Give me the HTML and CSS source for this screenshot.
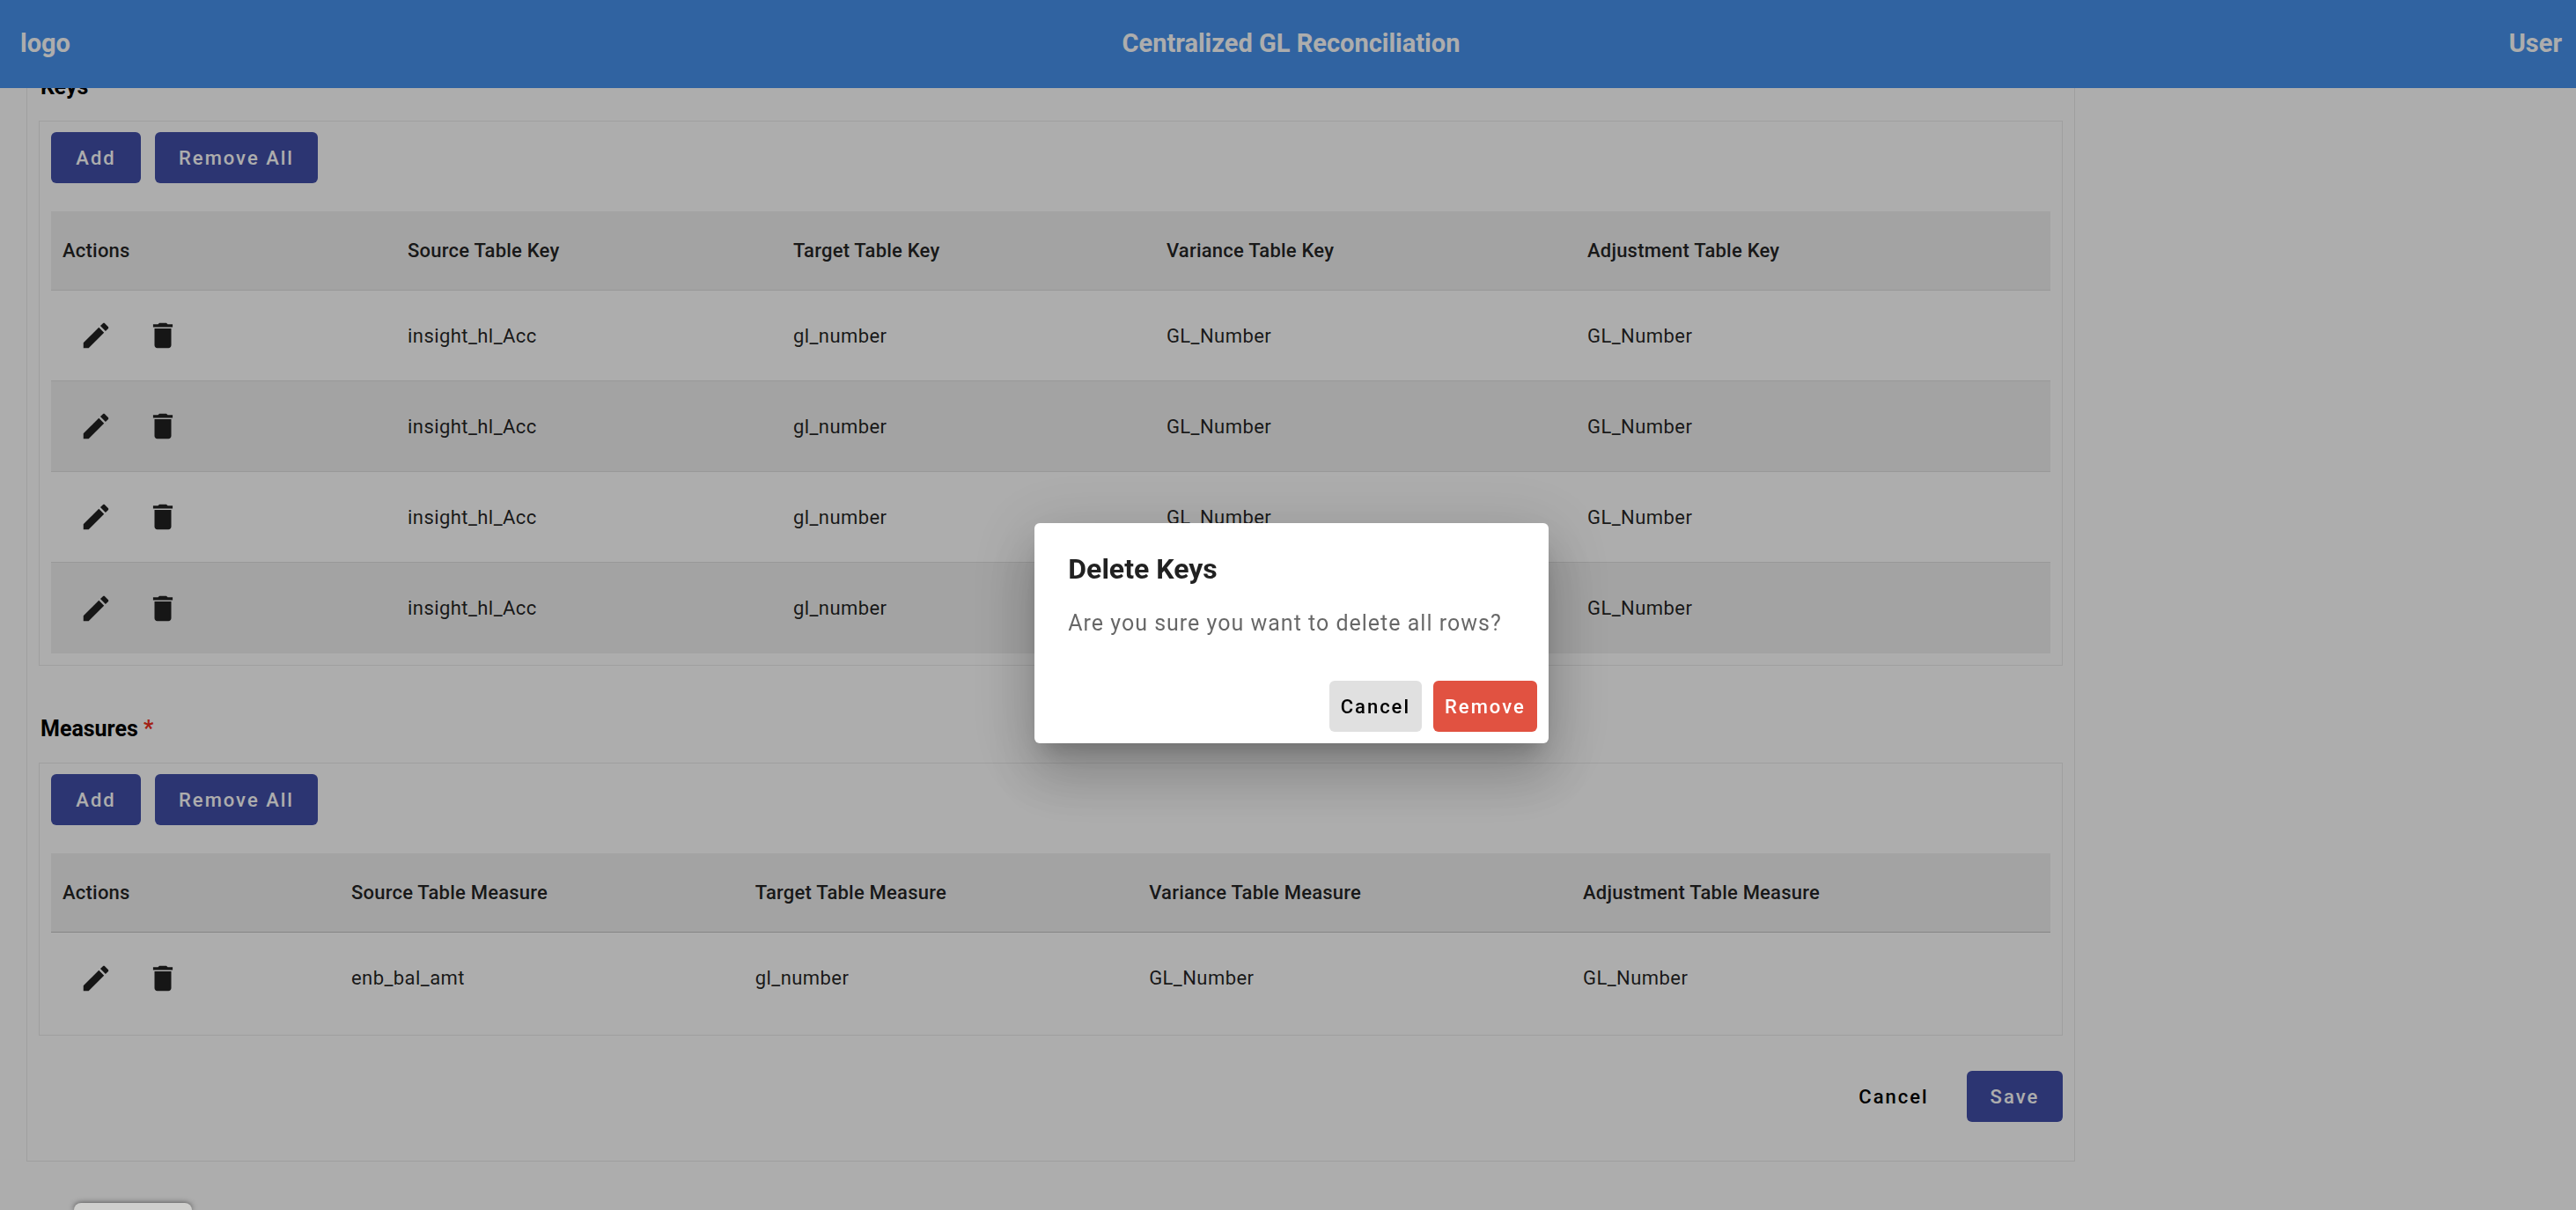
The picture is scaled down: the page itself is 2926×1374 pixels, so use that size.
FILE: index.html
```html
<!DOCTYPE html>
<html lang="en">
<head>
<meta charset="utf-8">
<title>Centralized GL Reconciliation</title>
<link rel="stylesheet" href="styles.css">
</head>
<body>
<svg class="sprite" aria-hidden="true">
  <symbol id="edit" viewBox="0 0 24 24"><path d="M3 17.25V21h3.75L17.81 9.94l-3.75-3.75L3 17.25zM20.71 7.04c.39-.39.39-1.02 0-1.41l-2.34-2.34c-.39-.39-1.02-.39-1.41 0l-1.83 1.83 3.75 3.75 1.83-1.83z"/></symbol>
  <symbol id="delete" viewBox="0 0 24 24"><path d="M6 19c0 1.1.9 2 2 2h8c1.1 0 2-.9 2-2V7H6v12zM19 4h-3.5l-1-1h-5l-1 1H5v2h14V4z"/></symbol>
</svg>

<header class="toolbar">
  <span class="toolbar-logo">logo</span>
  <h1 class="toolbar-title">Centralized GL Reconciliation</h1>
  <span class="toolbar-user">User</span>
</header>

<main class="page">
  <form class="config">
    <section class="group">
      <h2 class="group-title">Keys</h2>
      <div class="panel">
        <div class="panel-actions">
          <button type="button" class="btn btn-primary">Add</button>
          <button type="button" class="btn btn-primary">Remove All</button>
        </div>
        <table class="grid keys">
          <colgroup><col class="c1"><col class="c2"><col class="c3"><col class="c4"><col></colgroup>
          <thead>
            <tr><th scope="col">Actions</th><th scope="col">Source Table Key</th><th scope="col">Target Table Key</th><th scope="col">Variance Table Key</th><th scope="col">Adjustment Table Key</th></tr>
          </thead>
          <tbody>
            <tr>
              <td><div class="row-actions"><button type="button" class="icon-btn" aria-label="Edit"><svg><use href="#edit"/></svg></button><button type="button" class="icon-btn" aria-label="Delete"><svg><use href="#delete"/></svg></button></div></td>
              <td>insight_hl_Acc</td><td>gl_number</td><td>GL_Number</td><td>GL_Number</td>
            </tr>
            <tr>
              <td><div class="row-actions"><button type="button" class="icon-btn" aria-label="Edit"><svg><use href="#edit"/></svg></button><button type="button" class="icon-btn" aria-label="Delete"><svg><use href="#delete"/></svg></button></div></td>
              <td>insight_hl_Acc</td><td>gl_number</td><td>GL_Number</td><td>GL_Number</td>
            </tr>
            <tr>
              <td><div class="row-actions"><button type="button" class="icon-btn" aria-label="Edit"><svg><use href="#edit"/></svg></button><button type="button" class="icon-btn" aria-label="Delete"><svg><use href="#delete"/></svg></button></div></td>
              <td>insight_hl_Acc</td><td>gl_number</td><td>GL_Number</td><td>GL_Number</td>
            </tr>
            <tr>
              <td><div class="row-actions"><button type="button" class="icon-btn" aria-label="Edit"><svg><use href="#edit"/></svg></button><button type="button" class="icon-btn" aria-label="Delete"><svg><use href="#delete"/></svg></button></div></td>
              <td>insight_hl_Acc</td><td>gl_number</td><td>GL_Number</td><td>GL_Number</td>
            </tr>
          </tbody>
        </table>
      </div>
    </section>

    <section class="group">
      <h2 class="group-title">Measures <span class="required">*</span></h2>
      <div class="panel">
        <div class="panel-actions">
          <button type="button" class="btn btn-primary">Add</button>
          <button type="button" class="btn btn-primary">Remove All</button>
        </div>
        <table class="grid measures">
          <colgroup><col class="c1"><col class="c2"><col class="c3"><col class="c4"><col></colgroup>
          <thead>
            <tr><th scope="col">Actions</th><th scope="col">Source Table Measure</th><th scope="col">Target Table Measure</th><th scope="col">Variance Table Measure</th><th scope="col">Adjustment Table Measure</th></tr>
          </thead>
          <tbody>
            <tr>
              <td><div class="row-actions"><button type="button" class="icon-btn" aria-label="Edit"><svg><use href="#edit"/></svg></button><button type="button" class="icon-btn" aria-label="Delete"><svg><use href="#delete"/></svg></button></div></td>
              <td>enb_bal_amt</td><td>gl_number</td><td>GL_Number</td><td>GL_Number</td>
            </tr>
          </tbody>
        </table>
      </div>
    </section>

    <div class="form-actions">
      <button type="button" class="btn btn-text">Cancel</button>
      <button type="submit" class="btn btn-primary">Save</button>
    </div>
  </form>
</main>

<div class="overlay">
  <div class="dialog" role="alertdialog" aria-modal="true" aria-labelledby="dialog-title" aria-describedby="dialog-text">
    <h2 class="dialog-title" id="dialog-title">Delete Keys</h2>
    <p class="dialog-text" id="dialog-text">Are you sure you want to delete all rows?</p>
    <div class="dialog-actions">
      <button type="button" class="btn btn-compact btn-neutral">Cancel</button>
      <button type="button" class="btn btn-compact btn-warn">Remove</button>
    </div>
  </div>
</div>
<div class="status-popup"></div>
</body>
</html>
```

FILE: styles.css
```css
* { box-sizing: border-box; }

body {
  margin: 0;
  background: #fff;
  color: rgba(0, 0, 0, 0.87);
  font-family: Roboto, "Liberation Sans", sans-serif;
  font-size: 22px;
  overflow: hidden;
}

.sprite { display: none; }

/* Toolbar */
.toolbar {
  position: fixed;
  inset: 0 0 auto;
  z-index: 1;
  display: grid;
  grid-template-columns: 1fr auto 1fr;
  align-items: center;
  height: 100px;
  padding: 0 16px 2px 23px;
  background: #4893ed;
  color: #fff;
  font-size: 29px;
  font-weight: 700;
}

.toolbar-title {
  margin: 0;
  font: inherit;
}

.toolbar-user { text-align: right; }

/* Form */
.page { padding: 60px 30px 56px; }

.config {
  width: 81.2%;
  padding: 24px 13px 44px;
  border: 1px solid #ebebeb;
}

.group + .group { margin-top: 58px; }

.group-title {
  margin: 0 0 24px 2px;
  color: #000;
  font-size: 25px;
  font-weight: 700;
  line-height: 28px;
}

.required { color: #f03020; }

.panel {
  padding: 12px 13px 13px;
  border: 1px solid #ebebeb;
}

.panel-actions {
  display: flex;
  gap: 16px;
  margin-bottom: 32px;
}

/* Buttons */
.btn {
  min-width: 102px;
  height: 58px;
  padding: 0 27px;
  border: 0;
  border-radius: 6px;
  font: 500 22px Roboto, "Liberation Sans", sans-serif;
  letter-spacing: 2px;
}

.btn-primary { background: #424fa9; color: #fff; }
.btn-text { background: transparent; color: #000; }
.btn-neutral { background: #e0e0e0; color: #000; }
.btn-warn { background: #e15241; color: #fff; }
.btn-compact { padding: 0 13px; }

.icon-btn {
  display: grid;
  place-items: center;
  width: 76px;
  height: 76px;
  padding: 0;
  border: 0;
  background: none;
}

.icon-btn svg {
  width: 38px;
  height: 38px;
  fill: #212121;
}

/* Tables */
.grid {
  width: 100%;
  table-layout: fixed;
  border-collapse: separate;
  border-spacing: 0;
}

.keys .c1 { width: 17.26%; }
.keys .c2 { width: 19.28%; }
.keys .c3 { width: 18.67%; }
.keys .c4 { width: 21.05%; }
.measures .c1 { width: 14.44%; }
.measures .c2 { width: 20.2%; }
.measures .c3 { width: 19.7%; }
.measures .c4 { width: 21.7%; }

.grid th,
.grid td {
  padding: 0 13px;
  text-align: left;
  border-bottom: 1px solid #e0e0e0;
}

.grid th {
  height: 90px;
  background: #f0f0f0;
  font-weight: 500;
  letter-spacing: 0.01em;
}

.grid td {
  height: 103px;
  letter-spacing: 0.02em;
}

.grid tbody tr:nth-child(even) td { background: #f0f0f0; }
.grid tbody tr:last-child td { border-bottom: 0; }
.measures th { border-bottom-color: #c4c4c4; }

.row-actions { display: flex; }

.form-actions {
  display: flex;
  justify-content: flex-end;
  gap: 16px;
  margin-top: 40px;
}

/* Dialog */
.overlay {
  position: fixed;
  inset: 0;
  z-index: 2;
  display: flex;
  align-items: center;
  justify-content: center;
  padding: 64px 0 0 8px;
  background: rgba(0, 0, 0, 0.32);
}

.dialog {
  padding: 30px 13px 13px;
  border-radius: 6px;
  background: #fff;
  box-shadow:
    0 18px 24px -11px rgba(0, 0, 0, 0.2),
    0 38px 61px 5px rgba(0, 0, 0, 0.14),
    0 14px 74px 13px rgba(0, 0, 0, 0.12);
}

.dialog-title {
  margin: 0 25px;
  font-size: 32px;
  font-weight: 700;
  line-height: 44px;
}

.dialog-text {
  margin: 20px 40px 45px 25px;
  color: rgba(0, 0, 0, 0.6);
  font-size: 25px;
  line-height: 40px;
  letter-spacing: 1px;
}

.dialog-actions {
  display: flex;
  justify-content: flex-end;
  gap: 13px;
}

.status-popup {
  position: fixed;
  bottom: 0;
  left: 84px;
  z-index: 3;
  width: 134px;
  height: 8px;
  border-radius: 8px 8px 0 0;
  background: #cfcfcd;
  box-shadow: 0 0 6px rgba(0, 0, 0, 0.6);
}
```
